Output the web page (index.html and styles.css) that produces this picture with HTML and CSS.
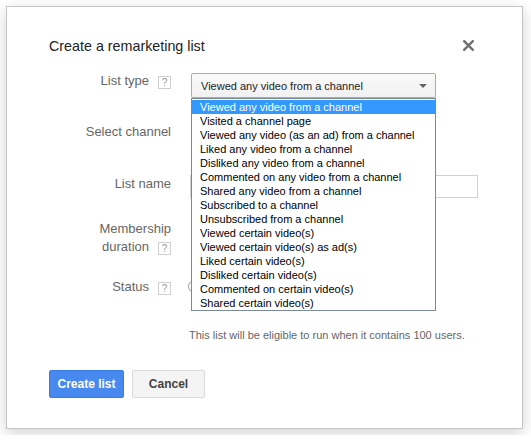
FILE: index.html
```html
<!DOCTYPE html>
<html>
<head>
<meta charset="utf-8">
<link rel="stylesheet" href="styles.css">
</head>
<body>
<div class="page">
  <div class="dialog">
    <div class="title">Create a remarketing list</div>
    <span class="close">
      <svg width="11" height="11" viewBox="0 0 11 11"><path d="M1.2 1.2 L9.8 9.8 M9.8 1.2 L1.2 9.8" stroke="#707070" stroke-width="2.4" stroke-linecap="square"/></svg>
    </span>
    <div class="form">
      <div class="row row-type">
        <div class="label">List type<span class="help">?</span></div>
        <div class="ctrl">
          <div class="select-wrap">
            <div class="select">
              <span>Viewed any video from a channel</span>
              <span class="arrow"></span>
            </div>
            <ul class="options">
              <li class="selected">Viewed any video from a channel</li>
              <li>Visited a channel page</li>
              <li>Viewed any video (as an ad) from a channel</li>
              <li>Liked any video from a channel</li>
              <li>Disliked any video from a channel</li>
              <li>Commented on any video from a channel</li>
              <li>Shared any video from a channel</li>
              <li>Subscribed to a channel</li>
              <li>Unsubscribed from a channel</li>
              <li>Viewed certain video(s)</li>
              <li>Viewed certain video(s) as ad(s)</li>
              <li>Liked certain video(s)</li>
              <li>Disliked certain video(s)</li>
              <li>Commented on certain video(s)</li>
              <li>Shared certain video(s)</li>
            </ul>
          </div>
        </div>
      </div>
      <div class="row row-channel">
        <div class="label">Select channel</div>
        <div class="ctrl"></div>
      </div>
      <div class="row row-name">
        <div class="label">List name</div>
        <div class="ctrl"><div class="input"></div></div>
      </div>
      <div class="row row-duration">
        <div class="label tall">Membership<br>duration<span class="help">?</span></div>
        <div class="ctrl"></div>
      </div>
      <div class="row row-status">
        <div class="label">Status<span class="help">?</span></div>
        <div class="ctrl"><span class="radio"></span></div>
      </div>
      <div class="row row-note">
        <div class="label"></div>
        <div class="ctrl note">This list will be eligible to run when it contains 100 users.</div>
      </div>
    </div>
    <div class="buttons">
      <button class="btn btn-primary">Create list</button>
      <button class="btn btn-default">Cancel</button>
    </div>
  </div>
</div>
</body>
</html>
```

FILE: styles.css
```css
html, body {
  margin: 0;
  padding: 0;
  background: #ffffff;
  font-family: "Liberation Sans", Arial, sans-serif;
}
.page {
  padding: 6px;
}
.dialog {
  position: relative;
  box-sizing: border-box;
  width: 517px;
  height: 423px;
  border: 1px solid #c4c4c4;
  background: #fff;
  box-shadow: 0 4px 14px rgba(0,0,0,0.18);
  padding: 29px 0 0 42px;
}
.title {
  font-size: 14.3px;
  line-height: 20px;
  color: #222;
}
.close {
  position: absolute;
  top: 33px;
  right: 48px;
  width: 11px;
  height: 11px;
  display: block;
}
.close svg { display: block; }
.form {
  margin-top: 17px;
  display: flex;
  flex-direction: column;
}
.row {
  display: flex;
  align-items: flex-start;
}
.label {
  flex: none;
  width: 122px;
  text-align: right;
  font-size: 13px;
  line-height: 16px;
  color: #666;
}
.label.tall { line-height: 18px; }
.help {
  display: inline-block;
  box-sizing: border-box;
  width: 13px;
  height: 13px;
  margin-left: 9px;
  border: 1px solid #cfcfcf;
  font-size: 10px;
  line-height: 11px;
  text-align: center;
  color: #999;
  vertical-align: -1px;
}
.ctrl {
  margin-left: 19px;
  flex: 1;
}
.row-type { height: 25px; }
.row-channel { margin-top: 26px; height: 16px; }
.row-name { margin-top: 35px; height: 23px; }
.row-name .label { padding-top: 1px; }
.row-duration { margin-top: 22px; height: 36px; }
.row-status { margin-top: 23px; height: 16px; }
.row-note { margin-top: 33px; }

.select-wrap {
  position: relative;
  z-index: 2;
}
.select {
  box-sizing: border-box;
  margin-left: 1px;
  width: 245px;
  height: 25px;
  border: 1px solid #cba96c;
  border-radius: 2px;
  background: linear-gradient(#fafafa, #f1f1f1);
  display: flex;
  align-items: center;
  justify-content: space-between;
  padding: 0 8px 0 9px;
  font-size: 11px;
  color: #222;
}
.arrow {
  width: 0;
  height: 0;
  border-left: 4px solid transparent;
  border-right: 4px solid transparent;
  border-top: 4px solid #666;
  margin-top: 1px;
}
.options {
  position: absolute;
  top: 25px;
  left: 1px;
  box-sizing: border-box;
  width: 245px;
  margin: 0;
  padding: 1px 0 0;
  list-style: none;
  background: #fff;
  border: 1px solid #7a8a99;
}
.options li {
  height: 14px;
  line-height: 14px;
  font-size: 11px;
  color: #000;
  padding-left: 8px;
  white-space: nowrap;
}
.options li.selected {
  background: #3399ff;
  color: #fff;
}
.input {
  box-sizing: border-box;
  width: 288px;
  height: 23px;
  border: 1px solid #d0d0d0;
  background: #fff;
}
.radio {
  display: block;
  box-sizing: border-box;
  width: 13px;
  height: 13px;
  margin-left: -2px;
  margin-top: 1px;
  border: 1px solid #999;
  border-radius: 50%;
}
.note {
  margin-left: 18px;
  font-size: 11px;
  line-height: 14px;
  color: #666;
}
.buttons {
  margin-top: 28px;
  display: flex;
  gap: 8px;
}
.btn {
  box-sizing: border-box;
  height: 28px;
  border-radius: 2px;
  font-family: "Liberation Sans", Arial, sans-serif;
  font-size: 12px;
  font-weight: bold;
  padding: 0;
  cursor: pointer;
}
.btn-primary {
  width: 75px;
  background: #4889f0;
  border: 1px solid #3a7ae6;
  color: #fff;
}
.btn-default {
  width: 73px;
  background: #f4f4f4;
  border: 1px solid #d9d9d9;
  color: #444;
}
```
